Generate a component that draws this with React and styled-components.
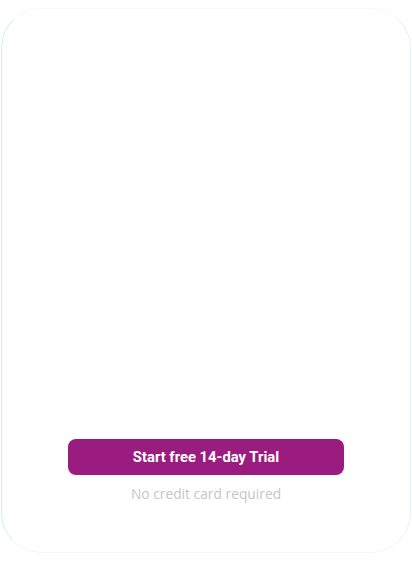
import styled, { createGlobalStyle } from 'styled-components'

const GlobalStyle = createGlobalStyle`
  html, body {
    margin: 0;
    padding: 0;
    background: #ffffff;
  }
  body {
    font-family: Roboto, "Liberation Sans", sans-serif;
  }
`

const Page = styled.div`
  width: 412px;
  height: 566px;
  box-sizing: border-box;
  padding: 8px 1px 13px 1px;
  display: flex;
`

const Card = styled.div`
  flex: 1;
  border-radius: 40px;
  border: 1px solid;
  border-color: #f6fafd #e6f1fa #f0f7fc #d9ebf8;
  background: #ffffff;
  display: flex;
  flex-direction: column;
  justify-content: flex-end;
  align-items: center;
  padding-bottom: 49px;
`

const TrialButton = styled.button`
  width: 276px;
  height: 36px;
  border: none;
  border-radius: 8px;
  background: #9b1c7f;
  color: #ffffff;
  font-family: Roboto, "Liberation Sans", sans-serif;
  font-weight: 700;
  font-size: 14.8px;
  cursor: pointer;
`

const Note = styled.p`
  margin: 10px 0 0;
  font-family: "Open Sans", Lato, sans-serif;
  font-size: 13.8px;
  line-height: 18px;
  color: #c6c6c6;
`

function App() {
  return (
    <>
      <GlobalStyle />
      <Page>
        <Card>
          <TrialButton>Start free 14-day Trial</TrialButton>
          <Note>No credit card required</Note>
        </Card>
      </Page>
    </>
  )
}

export default App
